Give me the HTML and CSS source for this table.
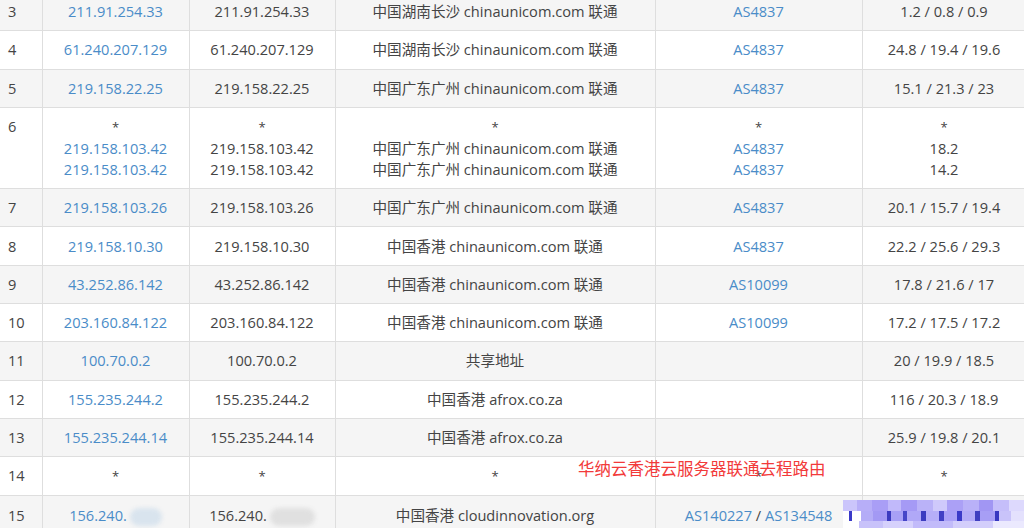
FILE: index.html
```html
<!DOCTYPE html>
<html lang="zh-CN">
<head>
<meta charset="utf-8">
<title>路由追踪</title>
<link rel="stylesheet" href="styles.css">
</head>
<body>
<div class="page">
<table class="trace">
  <colgroup>
    <col class="c-hop"><col class="c-ip"><col class="c-host"><col class="c-geo"><col class="c-as"><col class="c-rtt">
  </colgroup>
  <tbody>
    <tr><td class="hop">3</td><td><a>211.91.254.33</a></td><td>211.91.254.33</td><td>中国湖南长沙 chinaunicom.com 联通</td><td><a>AS4837</a></td><td>1.2 / 0.8 / 0.9</td></tr>
    <tr><td class="hop">4</td><td><a>61.240.207.129</a></td><td>61.240.207.129</td><td>中国湖南长沙 chinaunicom.com 联通</td><td><a>AS4837</a></td><td>24.8 / 19.4 / 19.6</td></tr>
    <tr><td class="hop">5</td><td><a>219.158.22.25</a></td><td>219.158.22.25</td><td>中国广东广州 chinaunicom.com 联通</td><td><a>AS4837</a></td><td>15.1 / 21.3 / 23</td></tr>
    <tr><td class="hop">6</td>
      <td><span class="star">*</span><br><a>219.158.103.42</a><br><a>219.158.103.42</a></td>
      <td><span class="star">*</span><br>219.158.103.42<br>219.158.103.42</td>
      <td><span class="star">*</span><br>中国广东广州 chinaunicom.com 联通<br>中国广东广州 chinaunicom.com 联通</td>
      <td><span class="star">*</span><br><a>AS4837</a><br><a>AS4837</a></td>
      <td><span class="star">*</span><br>18.2<br>14.2</td></tr>
    <tr><td class="hop">7</td><td><a>219.158.103.26</a></td><td>219.158.103.26</td><td>中国广东广州 chinaunicom.com 联通</td><td><a>AS4837</a></td><td>20.1 / 15.7 / 19.4</td></tr>
    <tr><td class="hop">8</td><td><a>219.158.10.30</a></td><td>219.158.10.30</td><td>中国香港 chinaunicom.com 联通</td><td><a>AS4837</a></td><td>22.2 / 25.6 / 29.3</td></tr>
    <tr><td class="hop">9</td><td><a>43.252.86.142</a></td><td>43.252.86.142</td><td>中国香港 chinaunicom.com 联通</td><td><a>AS10099</a></td><td>17.8 / 21.6 / 17</td></tr>
    <tr><td class="hop">10</td><td><a>203.160.84.122</a></td><td>203.160.84.122</td><td>中国香港 chinaunicom.com 联通</td><td><a>AS10099</a></td><td>17.2 / 17.5 / 17.2</td></tr>
    <tr><td class="hop">11</td><td><a>100.70.0.2</a></td><td>100.70.0.2</td><td>共享地址</td><td></td><td>20 / 19.9 / 18.5</td></tr>
    <tr><td class="hop">12</td><td><a>155.235.244.2</a></td><td>155.235.244.2</td><td>中国香港 afrox.co.za</td><td></td><td>116 / 20.3 / 18.9</td></tr>
    <tr><td class="hop">13</td><td><a>155.235.244.14</a></td><td>155.235.244.14</td><td>中国香港 afrox.co.za</td><td></td><td>25.9 / 19.8 / 20.1</td></tr>
    <tr><td class="hop">14</td><td><span class="star">*</span></td><td><span class="star">*</span></td><td><span class="star">*</span></td><td><span class="star">*</span></td><td><span class="star">*</span></td></tr>
    <tr><td class="hop">15</td><td><a>156.240.</a><span class="blur blur-blue"></span></td><td>156.240.<span class="blur blur-gray"></span></td><td>中国香港 cloudinnovation.org</td><td><a>AS140227</a> / <a>AS134548</a></td><td></td></tr>
  </tbody>
</table>
<div class="note">华纳云香港云服务器联通去程路由</div>
<div class="mosaic"></div>
</div>
</body>
</html>
```
FILE: styles.css
```css
html, body {
  margin: 0;
  padding: 0;
  background: #fff;
  overflow: hidden;
}
body {
  width: 1024px;
  height: 528px;
  font-family: "Open Sans", "Noto Sans CJK SC", sans-serif;
  font-size: 14.6px;
  color: #444;
}
.page {
  display: flow-root;
  position: relative;
  width: 1024px;
  height: 528px;
}
.trace {
  margin-top: -8px;
  width: 1026px;
  table-layout: fixed;
  border-collapse: collapse;
}
.c-hop { width: 42px; }
.c-ip { width: 147px; }
.c-host { width: 146px; }
.c-geo { width: 320px; }
.c-as { width: 207px; }
.c-rtt { width: 164px; }
.trace td {
  border: 1px solid #dedede;
  padding: 8.15px 4px;
  line-height: 21px;
  text-align: center;
  vertical-align: top;
  white-space: nowrap;
}
.trace td.hop {
  text-align: left;
  padding-left: 8px;
  border-left: 0;
}
.trace tr:nth-child(odd) td {
  background: #f5f5f5;
}
.trace a {
  color: #4a8cc8;
  text-decoration: none;
}
.star {
  font-size: 13px;
}
.blur {
  display: inline-block;
  vertical-align: middle;
  height: 18px;
  border-radius: 9px;
  filter: blur(2px);
  margin-left: 3px;
}
.blur-blue {
  width: 32px;
  background: #d9e4ee;
}
.blur-gray {
  width: 45px;
  background: #e0e0e0;
}
.note {
  position: absolute;
  left: 578px;
  top: 457px;
  font-family: "Noto Sans CJK SC", sans-serif;
  font-size: 16.5px;
  line-height: 22px;
  color: #f23a3a;
  white-space: nowrap;
}
.mosaic {
  position: absolute;
  left: 843px;
  top: 500px;
  width: 181px;
  height: 28px;
  background:
    linear-gradient(90deg, #cbc5fb 0 14px, #b7aef8 14px 29px, #a99ef6 29px 45px, #c1b9fa 45px 58px, #a59af5 58px 74px, #bab2f8 74px 90px, #cfc9fb 90px 104px, #aba0f6 104px 120px, #b9b1f8 120px 136px, #a196f3 136px 150px, #c5befa 150px 166px, #ddd9fd 166px 181px) top / 100% 11px no-repeat,
    linear-gradient(90deg, #fff 0 6px, #3a3ac8 6px 9px, #fff 9px 18px, #b4acf7 18px 30px, #a399f4 30px 44px, #3b3bc0 44px 48px, #a8a0f6 48px 60px, #4646c8 60px 64px, #b0a8f7 64px 78px, #3c3cc0 78px 83px, #b6aef8 83px 96px, #4040c4 96px 101px, #aaa1f6 101px 114px, #3a3ac8 114px 119px, #b3abf7 119px 132px, #3f3fc0 132px 137px, #a79ef5 137px 152px, #3737c0 152px 156px, #c9c3fa 156px 168px, #e4e1fd 168px 181px) 0 11px / 100% 10px no-repeat,
    linear-gradient(90deg, #fff 0 16px, #c8c2fa 16px 40px, #d6d1fc 40px 70px, #c2bbfa 70px 110px, #d3cefb 110px 150px, #ebe9fe 150px 181px) bottom / 100% 7px no-repeat;
}
```
